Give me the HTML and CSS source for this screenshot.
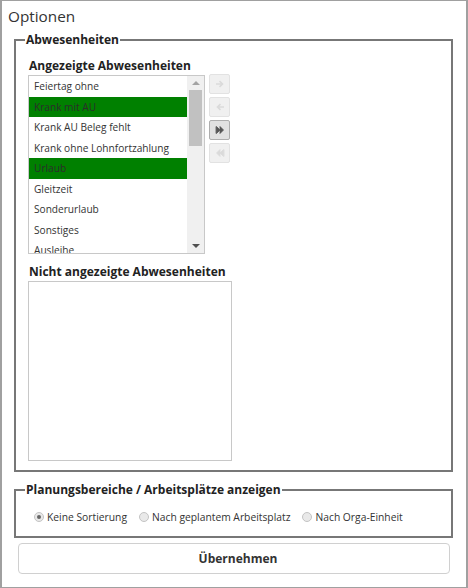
FILE: index.html
```html
<!DOCTYPE html>
<html lang="de">
<head>
<meta charset="utf-8">
<title>Optionen</title>
<link rel="stylesheet" href="styles.css">
</head>
<body>
<div class="window">
  <div class="title">Optionen</div>
  <fieldset class="group group-abw">
    <legend>Abwesenheiten</legend>
    <div class="label">Angezeigte Abwesenheiten</div>
    <div class="list-row">
      <div class="listbox shown">
        <ul class="items">
          <li>Feiertag ohne</li>
          <li class="sel">Krank mit AU</li>
          <li>Krank AU Beleg fehlt</li>
          <li>Krank ohne Lohnfortzahlung</li>
          <li class="sel">Urlaub</li>
          <li>Gleitzeit</li>
          <li>Sonderurlaub</li>
          <li>Sonstiges</li>
          <li>Ausleihe</li>
        </ul>
        <div class="scrollbar">
          <span class="arrow up"></span>
          <div class="track"><div class="thumb"></div></div>
          <span class="arrow down"></span>
        </div>
      </div>
      <div class="movers">
        <button class="mv" disabled>
          <svg viewBox="0 0 10 10" width="10" height="10"><path d="M1 5h6M4.5 2.2L7.5 5 4.5 7.8" fill="none" stroke="currentColor" stroke-width="1.6"/></svg>
        </button>
        <button class="mv" disabled>
          <svg viewBox="0 0 10 10" width="10" height="10"><path d="M9 5H3M5.5 2.2L2.5 5 5.5 7.8" fill="none" stroke="currentColor" stroke-width="1.6"/></svg>
        </button>
        <button class="mv active">
          <svg viewBox="0 0 10 10" width="10" height="10"><path d="M1 1.5v7M1.5 1.5L5 5 1.5 8.5zM5 1.5L8.5 5 5 8.5z" fill="currentColor" stroke="currentColor" stroke-width="0.8"/></svg>
        </button>
        <button class="mv" disabled>
          <svg viewBox="0 0 10 10" width="10" height="10"><path d="M9 1.5v7M8.5 1.5L5 5 8.5 8.5zM5 1.5L1.5 5 5 8.5z" fill="currentColor" stroke="currentColor" stroke-width="0.8"/></svg>
        </button>
      </div>
    </div>
    <div class="label label-second">Nicht angezeigte Abwesenheiten</div>
    <div class="listbox hidden-list"></div>
  </fieldset>
  <fieldset class="group group-plan">
    <legend>Planungsbereiche / Arbeitsplätze anzeigen</legend>
    <div class="radios">
      <label class="radio-item"><span class="radio checked"></span>Keine Sortierung</label>
      <label class="radio-item"><span class="radio"></span>Nach geplantem Arbeitsplatz</label>
      <label class="radio-item"><span class="radio"></span>Nach Orga-Einheit</label>
    </div>
  </fieldset>
  <button class="apply">Übernehmen</button>
</div>
</body>
</html>
```
FILE: styles.css
```css
* { box-sizing: border-box; }
html, body { margin: 0; padding: 0; background: #fff; }
body {
  font-family: "Open Sans", "Noto Sans", sans-serif;
  color: #333;
}
.window {
  width: 468px;
  height: 588px;
  border: 1px solid #a0a0a0;
  border-left-width: 2px;
  border-right-width: 2px;
  padding: 5px 13px 0 6px;
  display: flex;
  flex-direction: column;
}
.title {
  font-size: 15.3px;
  line-height: 20px;
  color: #333;
  margin-bottom: 6px;
}
.group {
  margin: 0 0 0 6px;
  border: 2px solid #777;
  padding: 0 12px 0 13px;
  min-width: 0;
}
.group legend {
  font-size: 12px;
  font-weight: 700;
  line-height: 16px;
  padding: 0 1px;
  margin-left: -4px;
  color: #222;
}
.group-abw {
  height: 440px;
  padding-top: 9px;
}
.label {
  font-size: 12px;
  font-weight: 700;
  line-height: 17px;
  color: #222;
  margin-bottom: 1px;
}
.label-second { margin-top: 9px; }
.list-row {
  display: flex;
  align-items: flex-start;
  gap: 4px;
  margin-left: -1px;
}
.listbox {
  border: 1px solid #c8c8c8;
  background: #fff;
}
.listbox.shown {
  width: 177px;
  height: 179px;
  display: flex;
  overflow: hidden;
}
.items {
  list-style: none;
  margin: 0;
  padding: 0;
  flex: 1;
  min-width: 0;
}
.items li {
  height: 20.5px;
  line-height: 20.5px;
  font-size: 10.15px;
  padding-left: 5px;
  white-space: nowrap;
  color: #333;
}
.items li.sel {
  background: #008000;
  color: #2c2c2c;
}
.scrollbar {
  width: 17px;
  flex: none;
  background: #f0f0f0;
  display: flex;
  flex-direction: column;
  align-items: center;
}
.arrow {
  width: 0;
  height: 0;
  border-left: 4px solid transparent;
  border-right: 4px solid transparent;
  margin: 5px 0;
}
.arrow.up { border-bottom: 4px solid #a3a3a3; }
.arrow.down { border-top: 4px solid #505050; }
.track {
  flex: 1;
  width: 100%;
  padding: 0 2px;
}
.thumb {
  height: 56px;
  background: #c1c1c1;
}
.movers {
  display: flex;
  flex-direction: column;
  gap: 3px;
  margin-top: -1px;
}
.mv {
  width: 21px;
  height: 20px;
  padding: 0;
  border: 1px solid #e2e2e2;
  border-radius: 2px;
  background: #f0f0f0;
  color: #dadada;
  display: flex;
  align-items: center;
  justify-content: center;
}
.mv.active {
  border-color: #adadad;
  background: #e1e1e1;
  color: #555;
}
.hidden-list {
  width: 204px;
  height: 180px;
  margin-left: -1px;
}
.group-plan {
  margin-top: 10px;
  height: 56px;
  padding-top: 11px;
}
.radios {
  display: flex;
  gap: 12px;
  padding-left: 5px;
  font-size: 10.3px;
  line-height: 16px;
  color: #333;
}
.radio-item {
  display: flex;
  align-items: center;
  gap: 3px;
}
.radio {
  width: 10px;
  height: 10px;
  border-radius: 50%;
  border: 1px solid #c4c4c4;
  background: #e9e9e9;
  display: flex;
  align-items: center;
  justify-content: center;
}
.radio.checked::after {
  content: "";
  width: 4px;
  height: 4px;
  border-radius: 50%;
  background: #666;
}
.apply {
  margin: 5px 3px 0 10px;
  height: 31px;
  padding: 0 0 0 8px;
  border: 1px solid #d0d0d0;
  border-radius: 4px;
  background: #fff;
  font-family: "Open Sans", "Noto Sans", sans-serif;
  font-size: 12px;
  font-weight: 700;
  color: #333;
}
```
